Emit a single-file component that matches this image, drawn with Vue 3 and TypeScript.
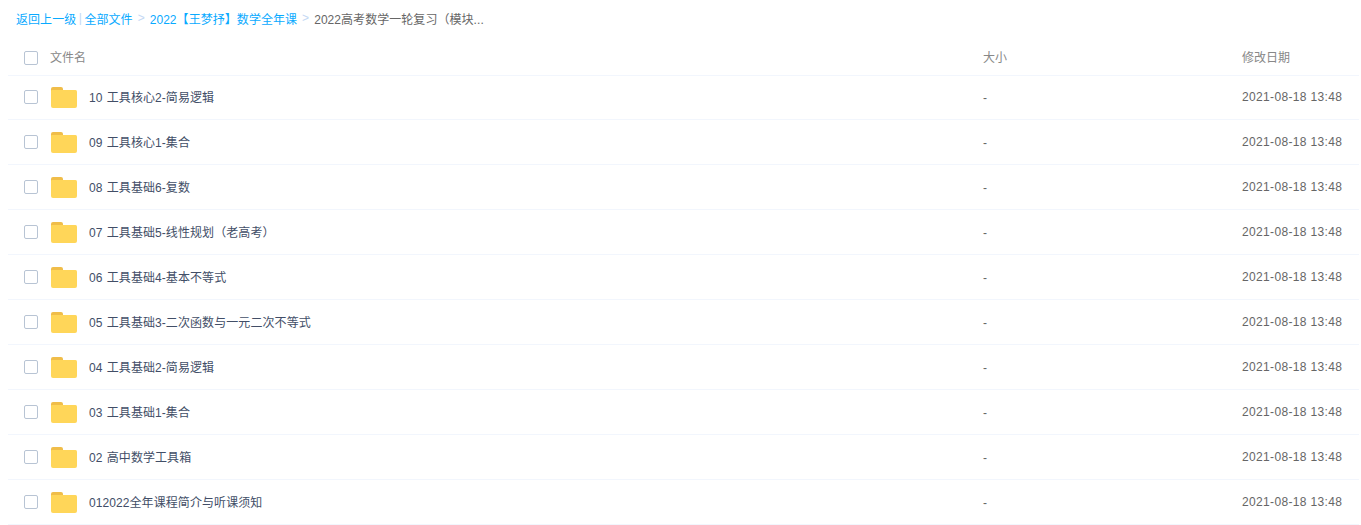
<template>
  <div class="file-page">
    <!-- 面包屑 -->
    <div class="crumbs">
      <a class="link">返回上一级</a>
      <span class="pipe">|</span>
      <a class="link">全部文件</a>
      <span class="gt">&gt;</span>
      <a class="link">2022【王梦抒】数学全年课</a>
      <span class="gt">&gt;</span>
      <span class="current">2022高考数学一轮复习（模块...</span>
    </div>

    <!-- 表头 -->
    <div class="row head">
      <span class="check"></span>
      <span class="name-col">文件名</span>
      <span class="size-col">大小</span>
      <span class="date-col">修改日期</span>
    </div>

    <!-- 文件列表 -->
    <div v-for="file in files" :key="file" class="row item">
      <span class="check"></span>
      <div class="name-col">
        <svg class="folder" width="26" height="21" viewBox="0 0 26 21">
          <path d="M0 2a2 2 0 0 1 2-2h8a2 2 0 0 1 2 2v2H0z" fill="#f0bd49" />
          <path d="M0 4a1 1 0 0 1 1-1h23.500a1.500 1.500 0 0 1 1.500 1.500V19a2 2 0 0 1-2 2H2a2 2 0 0 1-2-2z" fill="#ffd659" />
        </svg>
        <span class="file-name">{{ file }}</span>
      </div>
      <span class="size-col dash">-</span>
      <span class="date-col stamp">2021-08-18 13:48</span>
    </div>
  </div>
</template>

<script setup lang="ts">
const files: string[] = [
  '10 工具核心2-简易逻辑',
  '09 工具核心1-集合',
  '08 工具基础6-复数',
  '07 工具基础5-线性规划（老高考）',
  '06 工具基础4-基本不等式',
  '05 工具基础3-二次函数与一元二次不等式',
  '04 工具基础2-简易逻辑',
  '03 工具基础1-集合',
  '02 高中数学工具箱',
  '012022全年课程简介与听课须知'
]
</script>

<style>
html,
body {
  background: #fff;
}
</style>

<style scoped>
.file-page {
  height: 525px;
  overflow: hidden;
  padding: 0 2px 0 8px;
  font-family: "Liberation Sans", "Noto Sans CJK SC", sans-serif;
  font-size: 12px;
  color: #666;
}

.crumbs {
  display: flex;
  align-items: center;
  box-sizing: border-box;
  height: 38px;
  padding: 0 0 2px 8px;
  color: #666;
  white-space: nowrap;
  letter-spacing: 0.05px;
}

.link {
  color: #09aaff;
}

.pipe {
  margin: 0 2.5px;
  color: #c4d8f4;
}

.gt {
  margin: 0 5px;
  color: #c4d8f4;
}

.current {
  color: #666;
}

.row {
  display: flex;
  align-items: center;
  box-sizing: border-box;
  height: 45px;
  border-bottom: 1px solid #f2f6fd;
}

.head {
  height: 38px;
  margin-bottom: -1px;
  color: #888;
}

.head .check {
  margin-top: 3px;
}

.check {
  flex: none;
  box-sizing: border-box;
  width: 14px;
  height: 14px;
  margin: 0 12px 0 16px;
  border: 1px solid #b8c4d4;
  border-radius: 2px;
  background: #fff;
}

.name-col {
  display: flex;
  align-items: center;
  flex: none;
  width: 933px;
}

.size-col {
  flex: none;
  width: 259px;
}

.date-col {
  flex: none;
}

.dash {
  margin-top: 2px;
}

.stamp {
  letter-spacing: 0.35px;
}

.folder {
  flex: none;
  margin: 1px 12px 0 1px;
}

.file-name {
  margin-bottom: 2px;
  color: #424e67;
  letter-spacing: 0.08px;
  word-spacing: 0.8px;
}
</style>
